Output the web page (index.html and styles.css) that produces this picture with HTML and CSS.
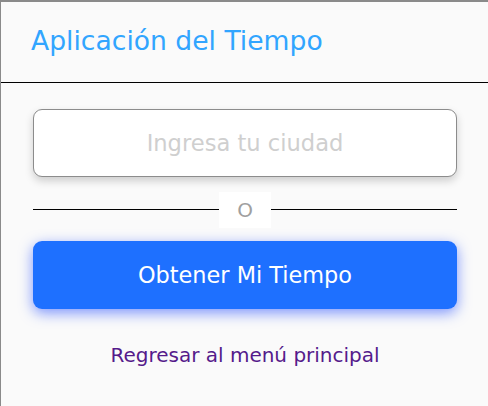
FILE: index.html
```html
<!DOCTYPE html>
<html lang="es">
<head>
<meta charset="utf-8">
<title>Aplicación del Tiempo</title>
<link rel="stylesheet" href="styles.css">
</head>
<body>
<div class="card">
  <header class="card-header">
    <h1 class="title">Aplicación del Tiempo</h1>
  </header>
  <main class="card-body">
    <input class="city-input" type="text" placeholder="Ingresa tu ciudad">
    <div class="divider">
      <span class="divider-line"></span>
      <span class="divider-text">O</span>
      <span class="divider-line"></span>
    </div>
    <button class="primary-btn" type="button">Obtener Mi Tiempo</button>
    <a class="back-link" href="#">Regresar al menú principal</a>
  </main>
</div>
</body>
</html>
```
FILE: styles.css
```css
* { box-sizing: border-box; }
html, body { margin: 0; padding: 0; }
body {
  background: #fafafa;
  font-family: "DejaVu Sans", "Open Sans", sans-serif;
  height: 406px;
  overflow: hidden;
}
.card {
  background: #fafafa;
  border-top: 2px solid #8a8a8a;
  border-left: 1px solid #8a8a8a;
  height: 406px;
}
.card-header {
  height: 81px;
  border-bottom: 1px solid #000;
  padding: 0 30px;
  display: flex;
  align-items: center;
}
.title {
  margin: 0;
  font-size: 26.6px;
  font-weight: 400;
  color: #31a5ff;
  line-height: 1;
  padding-bottom: 1px;
}
.card-body {
  padding: 26px 31px 0 32px;
  display: flex;
  flex-direction: column;
}
.city-input {
  height: 68px;
  width: 100%;
  border: 1px solid #8c8c8c;
  border-radius: 9px;
  background: #fff;
  box-shadow: 0 4px 8px rgba(0,0,0,0.18);
  font-family: inherit;
  font-size: 22.6px;
  text-align: center;
  color: #333;
  outline: none;
}
.city-input::placeholder { color: #cfcfcf; }
.divider {
  margin-top: 15px;
  display: flex;
  align-items: center;
  height: 36px;
}
.divider-line {
  flex: 1;
  height: 1px;
  background: #000;
  margin-top: -1px;
}
.divider-text {
  width: 52px;
  height: 36px;
  background: #fff;
  display: flex;
  align-items: center;
  justify-content: center;
  color: #a0a0a0;
  font-size: 20px;
}
.primary-btn {
  margin-top: 13px;
  height: 68px;
  width: 100%;
  border: none;
  border-radius: 9px;
  background: #1e70ff;
  color: #fff;
  font-family: inherit;
  font-size: 22.4px;
  box-shadow: 0 4px 14px rgba(40, 80, 255, 0.6);
}
.back-link {
  margin-top: 34px;
  align-self: center;
  color: #551a8b;
  text-decoration: none;
  font-size: 20px;
}
```
